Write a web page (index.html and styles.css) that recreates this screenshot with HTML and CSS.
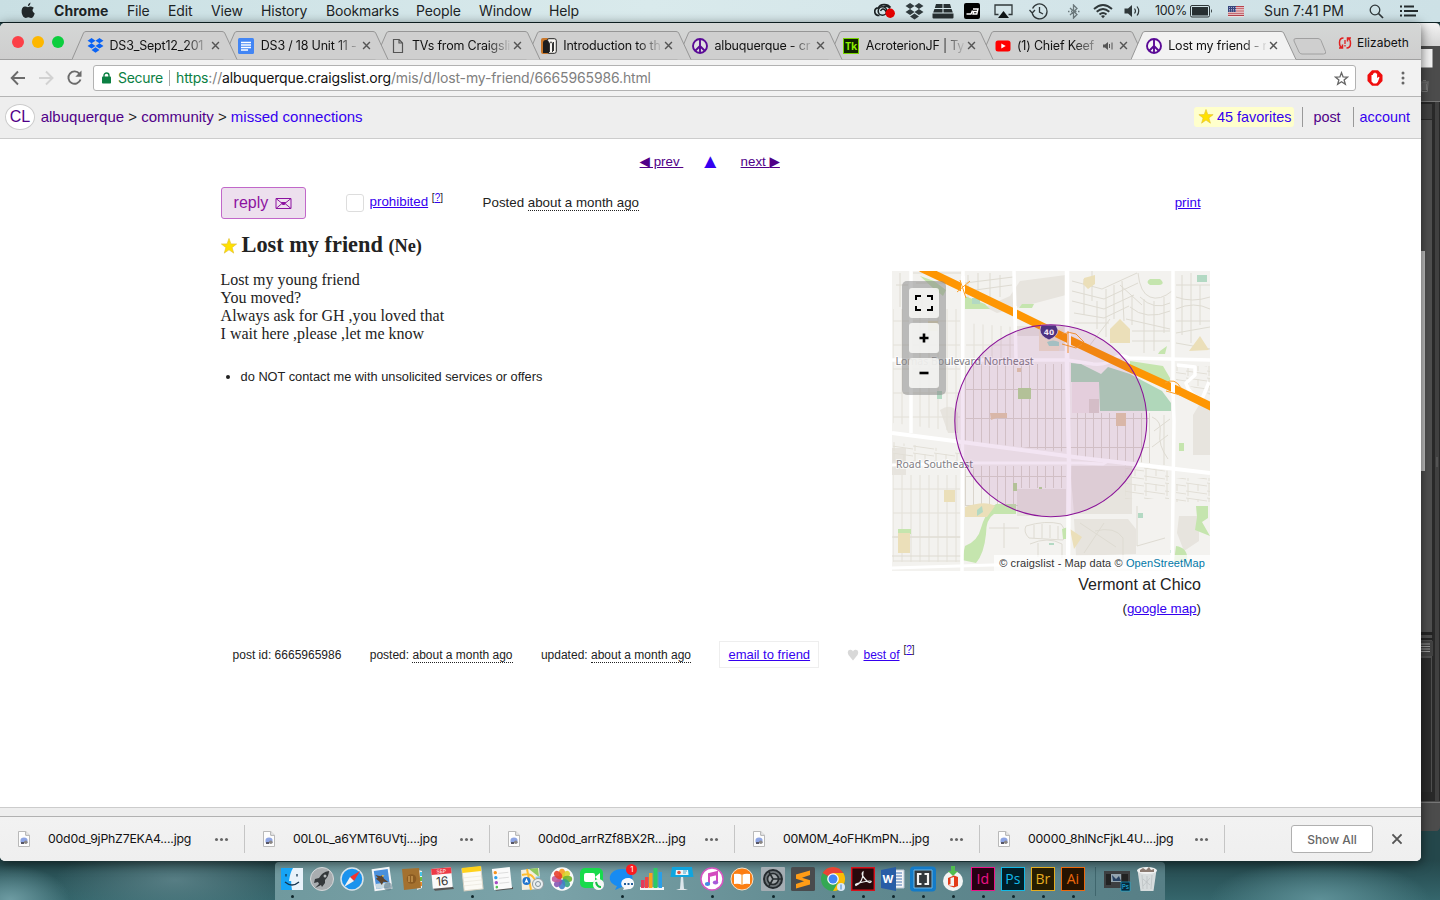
FILE: index.html
```html
<!DOCTYPE html>
<html lang="en">
<head>
<meta charset="utf-8">
<title>Lost my friend - missed connections</title>
<link rel="stylesheet" href="styles.css">
</head>
<body>
<svg class="defs" width="0" height="0" aria-hidden="true">
  <symbol id="x" viewBox="0 0 10 10"><path d="M1.2 1.2l7.6 7.6M8.8 1.2L1.2 8.8" stroke="#555" stroke-width="1.6" fill="none"/></symbol>
  <symbol id="peace" viewBox="0 0 16 16"><circle cx="8" cy="8" r="7" fill="#fff" fill-opacity=".35" stroke="#5a0a96" stroke-width="1.9"/><path d="M8 1v14M8 8l-5 5M8 8l5 5" stroke="#5a0a96" stroke-width="1.9" fill="none"/></symbol>
  <symbol id="drop" viewBox="0 0 18 16"><path d="M4.8 0L9 2.8 4.8 5.6.5 2.8zM13.2 0l4.3 2.8-4.3 2.8L9 2.8zM4.8 5.6L9 8.4l-4.2 2.8L.5 8.4zM13.2 5.6l4.3 2.8-4.3 2.8L9 8.4zM9 9.8l4.2 2.9L9 15.6l-4.2-2.9z"/></symbol>
  <symbol id="star" viewBox="0 0 16 16"><path d="M8 .5l1.9 5.4 5.7.1-4.5 3.5 1.6 5.6L8 11.8l-4.7 3.3 1.6-5.6L.4 6l5.7-.1z"/></symbol>
  <symbol id="file" viewBox="0 0 12 16"><path d="M.5.5h7.2l3.8 3.8v11.2H.5z" fill="#fdfdfd" stroke="#b9b9b9"/><path d="M7.7.5v3.8h3.8" fill="#eee" stroke="#aaa"/><path d="M2.5 9q0-2.500 3.500-2.500T9.500 9v2.500h-7z" fill="#8da4e3"/><circle cx="7.800" cy="11.300" r="1.800" fill="#8b8785"/><path d="M3 11h3v2H3z" fill="#556"/></symbol>
  <symbol id="tab" viewBox="0 0 167 29"><path class="tabfill" d="M0 28.5L11.5 2Q12.200.5 14 .5H150Q152 .5 152.700 2L165 28.500z"/><path d="M0 28.500L11.500 2Q12.200.5 14 .5H150Q152 .5 152.700 2L165 28.500" fill="none" stroke="#969696"/></symbol>
</svg>

<div class="desktop">
  <header class="menubar">
    <nav class="menus">
      <svg class="apple" width="14" height="17" viewBox="0 0 14 17"><path d="M9.400.5Q9.600 3.500 6.800 4.200 6.700 1.500 9.400.5zM7 5.200Q9.500 3.800 12.800 5.800 9.800 8.800 13.700 11.400 12.200 16 10 15.900L7.200 15.200 4.800 15.900Q2 16 .7 11 0 5 3.800 4.500 5.500 4.400 7 5.200z" fill="#22282a"/></svg>
      <b>Chrome</b><span>File</span><span>Edit</span><span>View</span><span>History</span><span>Bookmarks</span><span>People</span><span>Window</span><span>Help</span>
    </nav>
    <div class="extras">
      <svg width="22" height="16" viewBox="0 0 22 16"><path d="M5.500 12.500C-.8 12.500-.5 4.500 4.500 4.800 6 .8 13.500.2 16.500 4.500" stroke="#1c2224" stroke-width="1.700" fill="none"/><circle cx="8.500" cy="8" r="4.300" fill="none" stroke="#1c2224" stroke-width="1.600"/><path d="M6.500 8q2-3.500 4.500-1l2 3M10 3.500q4-1 6 2" fill="none" stroke="#1c2224" stroke-width="1.400"/><circle cx="16.200" cy="10.200" r="4.700" fill="#e50000"/></svg>
      <svg width="19" height="17" fill="#303a3d"><use href="#drop"/></svg>
      <svg width="22" height="15" viewBox="0 0 22 15" fill="#283032"><path d="M4 0h6.500v4H2.800zM11.500 0H18l1.200 4h-7.700zM2.400 5h8.100v3.500H1.200zM11.500 5h8.100l1.200 3.500h-9.300zM.5 9.500h21v4q0 1-1 1h-19q-1 0-1-1z"/></svg>
      <svg width="17" height="16" viewBox="0 0 17 16"><rect width="16" height="16" rx="2" fill="#000"/><path d="M2.500 11h4.500l1.500-3.500M9 6h5l-1.200 5H9l.6-2.500h3.500" stroke="#fff" stroke-width="1.400" fill="none"/></svg>
      <svg width="19" height="15" viewBox="0 0 19 15"><path d="M4.500 10.500H1V1h17v9.500h-3.500" fill="none" stroke="#30383a" stroke-width="1.300"/><path d="M9.500 7l5.500 7H4z" fill="#101617"/></svg>
      <svg width="19" height="17" viewBox="0 0 19 17"><path d="M3.300 10.500A7.500 7.500 0 1 0 3.600 5.500M.5 7l2.700 3 2.800-3M10.500 4v5l3.500 2" fill="none" stroke="#30383a" stroke-width="1.300"/></svg>
      <svg width="13" height="15" viewBox="0 0 13 15"><path d="M3 4l7 6.500L6.500 14V1L10 4.500 3 11M1 7.500h1.500M4 7.500h1.200M8 7.500h1.500M11 7.500h1.500" stroke="#6c797c" stroke-width="1.300" fill="none"/></svg>
      <svg width="20" height="15" viewBox="0 0 20 15"><path d="M1 5Q10-3 19 5M3.700 7.800Q10 2.200 16.300 7.800M6.500 10.500Q10 7.500 13.500 10.500" fill="none" stroke="#30383a" stroke-width="1.900"/><path d="M8 12q2-1.500 4 0l-2 2.200z" fill="#30383a"/></svg>
      <svg width="18" height="14" viewBox="0 0 18 14"><path d="M.5 4.500H4L8 1v12L4 9.500H.5z" fill="#30383a"/><path d="M10.500 4.500q2 2.500 0 5M13 2.500q3.500 4.500 0 9" fill="none" stroke="#30383a" stroke-width="1.200"/></svg>
      <span class="pct">100%</span>
      <svg width="23" height="13" viewBox="0 0 23 13"><rect x=".5" y=".5" width="19" height="11.500" rx="1.500" fill="none" stroke="#30383a"/><rect x="2" y="2" width="16" height="8.500" fill="#283032"/><path d="M21 4q2 2 0 4z" fill="#30383a"/></svg>
      <svg width="16" height="11" viewBox="0 0 16 11"><path fill="#f4e9e9" d="M0 0h16v11H0z"/><path d="M0 .6h16M0 2.800h16M0 5h16M0 7.200h16M0 9.400h16" stroke="#b8424d" stroke-width="1.100"/><path fill="#35477d" d="M0 0h8v6H0z"/><path d="M1 1.500h7M1 3.500h7M1 5h7" stroke="#dce" stroke-width=".7" stroke-dasharray="1 1"/></svg>
      <span class="clock">Sun 7:41 PM</span>
      <svg width="15" height="15" viewBox="0 0 15 15"><circle cx="6" cy="6" r="4.800" fill="none" stroke="#30383a" stroke-width="1.300"/><path d="M9.500 9.500l4.500 4.500" stroke="#30383a" stroke-width="1.700"/></svg>
      <svg width="19" height="12" viewBox="0 0 19 12"><path d="M1 1.500h2M1 6h2M1 10.500h2M5 1.500h10M5 6h14M5 10.500h12" stroke="#252c2e" stroke-width="1.800"/></svg>
    </div>
  </header>

  <div class="back-window">
    <svg width="30" height="808" viewBox="0 0 30 808">
      <defs><linearGradient id="bt" x2="0" y2="1"><stop stop-color="#f4f4f4"/><stop offset="1" stop-color="#d4d4d4"/></linearGradient></defs>
      <path d="M0 0h25q5 0 5 5v798q0 5-5 5H0z" fill="#4c4c4c"/><path d="M0 0h25q5 0 5 5v18H0z" fill="url(#bt)"/>
      <path d="M0 26h22.500v18.500H0z" fill="#f4f4f4"/>
      <path d="M11 60h7l-.7 8.500h-5.600zM10 59h9M13 57.500h3M13 61v6M15 61v6M16.500 61v6" fill="none" stroke="#777"/>
      <path fill="#777" d="M0 78h30v1H0z"/><path fill="#292929" d="M0 79h30v699H0z"/><path fill="#505050" d="M0 97h22v672H0z"/><path fill="#414141" d="M0 81h22v15H0z"/><path fill="#404040" d="M25 79h4v699h-4z"/>
      <path fill="#c5c5c5" d="M0 228h15v220H0z"/><path d="M27 434v10" stroke="#666"/>
      <path fill="#242424" d="M0 609h23v3H0zM0 615h23v2H0z"/><path fill="#424242" d="M0 618h23v15H0z"/><path d="M10 621h10M10 623.500h10M10 626h10M10 628.500h10" stroke="#999"/><path fill="#2c2c2c" d="M0 635h21v134H0z"/><path fill="#777" d="M0 779h30v1H0z"/>
      <path fill="#4c4c4c" d="M0 780h30v23q0 5-5 5H0z"/>
    </svg>
  </div>

  <section class="window">
    <div class="tabstrip">
      <div class="lights"><i class="r"></i><i class="y"></i><i class="g"></i></div>
      <div class="tabs">
        <div class="tab"><svg class="shape" width="167" height="29"><use href="#tab"/></svg><svg class="fav" width="17" height="15" fill="#0a63f5"><use href="#drop"/></svg><span class="title">DS3_Sept12_201</span><svg class="close" width="9" height="9"><use href="#x"/></svg></div>
        <div class="tab"><svg class="shape" width="167" height="29"><use href="#tab"/></svg><svg class="fav" width="16" height="16" viewBox="0 0 16 16"><rect width="16" height="16" rx="1.500" fill="#4285f4"/><path d="M3 4.500h10M3 7h10M3 9.500h10M3 12h7" stroke="#fff" stroke-width="1.300"/></svg><span class="title">DS3 / 18 Unit 11 -</span><svg class="close" width="9" height="9"><use href="#x"/></svg></div>
        <div class="tab"><svg class="shape" width="167" height="29"><use href="#tab"/></svg><svg class="fav" width="16" height="16" viewBox="0 0 16 16"><path d="M3.500 1.500h5.700l3.300 3.500v9.500h-9zM9 1.500V5h3.500" fill="none" stroke="#555" stroke-width="1.200"/></svg><span class="title">TVs from Craigsli</span><svg class="close" width="9" height="9"><use href="#x"/></svg></div>
        <div class="tab"><svg class="shape" width="167" height="29"><use href="#tab"/></svg><svg class="fav" width="16" height="16" viewBox="0 0 16 16"><rect width="8" height="16" rx="2" fill="#c9772a"/><rect x="6" y=".7" width="9.300" height="14.600" rx="2" fill="#f8f6f2" stroke="#222"/><path d="M2 15V5q0-3 3-3t3 3v10z" fill="#1d1d1d"/><path d="M8.500 14V6q0-2 1.500-2t1.500 2v8M12.500 13V4" fill="none" stroke="#333"/></svg><span class="title">Introduction to th</span><svg class="close" width="9" height="9"><use href="#x"/></svg></div>
        <div class="tab"><svg class="shape" width="167" height="29"><use href="#tab"/></svg><svg class="fav" width="16" height="16"><use href="#peace"/></svg><span class="title">albuquerque - cr</span><svg class="close" width="9" height="9"><use href="#x"/></svg></div>
        <div class="tab"><svg class="shape" width="167" height="29"><use href="#tab"/></svg><span class="fav tk">Tk</span><span class="title">AcroterionJF | Ty</span><svg class="close" width="9" height="9"><use href="#x"/></svg></div>
        <div class="tab"><svg class="shape" width="167" height="29"><use href="#tab"/></svg><svg class="fav" width="16" height="16" viewBox="0 0 16 16"><rect x=".5" y="2.500" width="15" height="11" rx="2.500" fill="#f00"/><path d="M6.300 5.500L10.700 8l-4.400 2.500z" fill="#fff"/></svg><span class="title short">(1) Chief Keef</span><svg class="sound" width="11" height="10" viewBox="0 0 11 10"><path d="M0 3.500h2L5 1v8L2 6.500H0z" fill="#555"/><path d="M6.500 3v4M9 1.500v7" stroke="#555"/></svg><svg class="close" width="9" height="9"><use href="#x"/></svg></div>
        <div class="tab active"><svg class="shape" width="167" height="29"><use href="#tab"/></svg><svg class="fav" width="16" height="16"><use href="#peace"/></svg><span class="title">Lost my friend - r</span><svg class="close" width="9" height="9"><use href="#x"/></svg></div>
      </div>
      <svg class="newtab" width="34" height="17" viewBox="0 0 34 17"><path d="M3 .5h22q2 0 3 2l4.500 11q1 2.500-2 2.500H9q-2 0-3-2L1 3Q.2.5 3 .5z" fill="#cfcfcf" stroke="#a0a0a0"/></svg>
      <div class="profile"><svg width="14" height="12" viewBox="0 0 14 12"><path d="M5.500 1Q1.500 1 1.500 5.500T4 10.500M1 11h3.500V7.500M8.500 11q4 0 4-4.500T10 1.500M13 1H9.500v3.500" stroke="#e02020" stroke-width="1.500" fill="none"/><path d="M7 3v4M7 8v1.500" stroke="#e02020" stroke-width="1.300"/></svg><span>Elizabeth</span></div>
    </div>

    <div class="toolbar">
      <svg class="nav" width="74" height="18" viewBox="0 0 74 18"><g fill="none" stroke-width="1.900"><path d="M15 9H2.500M8 2.500L1.700 9 8 15.500" stroke="#6b6b6b"/><path d="M29 9h13M36 2.500L42.500 9 36 15.500" stroke="#d2d2d2"/><path d="M69.500 4.800A6.200 6.200 0 1 0 70.500 10.500" stroke="#6b6b6b"/></g><path d="M71.500 1.500v6.300h-6.200z" fill="#6b6b6b"/></svg>
      <div class="omnibox">
        <svg width="9" height="12" viewBox="0 0 9 12"><rect y="4.500" width="9" height="7" rx=".8" fill="#0b8043"/><path d="M2 5V3.500a2.500 2.500 0 0 1 5 0V5" fill="none" stroke="#0b8043" stroke-width="1.400"/></svg>
        <span class="secure">Secure</span>
        <span class="url"><em>https</em>://<strong>albuquerque.craigslist.org</strong>/mis/d/lost-my-friend/6665965986.html</span>
        <svg class="bookmark" width="15" height="15" viewBox="0 0 16 16"><path d="M8 1.800l1.700 4.500 4.800.2-3.700 3 1.300 4.700L8 11.500l-4.100 2.700 1.300-4.700-3.700-3 4.800-.2z" fill="none" stroke="#666" stroke-width="1.400"/></svg>
      </div>
      <svg class="adblock" width="16" height="16" viewBox="0 0 16 16"><path d="M5 .3h6L15.500 5v6L11 15.700H5L.5 11V5z" fill="#f00d0d"/><path d="M4.500 8.500V5h1.400V3.500h1.300v-.8h1.600v.8h1.300V8l1.700-1.200.7.700-1.700 4.500-1.500 1.500H6.500l-2-2z" fill="#fff"/></svg>
      <svg width="4" height="14" viewBox="0 0 4 14" fill="#666"><circle cx="2" cy="2" r="1.500"/><circle cx="2" cy="7" r="1.500"/><circle cx="2" cy="12" r="1.500"/></svg>
    </div>

    <div class="cl-header">
      <span class="logo">CL</span>
      <div class="crumbs"><a class="v">albuquerque</a> &gt; <a class="v">community</a> &gt; <a>missed connections</a></div>
      <div class="account"><a class="favs"><svg width="16" height="15" fill="#ffe100" stroke="#e3c235" stroke-width=".7"><use href="#star"/></svg>45 favorites</a><a class="cell v">post</a><a class="cell">account</a></div>
    </div>

    <main class="page">
      <nav class="pager"><a class="v"><span class="tri">◀</span> prev&nbsp;</a><a><span class="tri up">▲</span></a><a class="v">next <span class="tri">▶</span></a></nav>
      <div class="actions">
        <button class="reply">reply <svg width="17" height="13" viewBox="0 0 17 13"><path d="M1 1.500h15v10H1z M1 1.500l7.500 6 7.500-6M1 11.500l6-5M16 11.500l-6-5" fill="none" stroke="#8c12a0"/><path d="M6 5h5L9.500 8h-2z" fill="#8c12a0"/></svg></button>
        <span class="box"></span>
        <span class="prohibited"><a>prohibited</a> <sup>[<a>?</a>]</sup></span>
        <span class="posted">Posted <time>about a month ago</time></span>
        <a class="print">print</a>
      </div>
      <h1><svg width="16" height="16" fill="#ffe100" stroke="#e3c235" stroke-width=".7"><use href="#star"/></svg>Lost my friend <small>(Ne)</small></h1>
      <div class="columns">
        <div class="copy">
          <p>Lost my young friend<br>You moved?<br>Always ask for GH ,you loved that<br>I wait here ,please ,let me know</p>
          <ul><li>do NOT contact me with unsolicited services or offers</li></ul>
        </div>
        <aside class="mapbox">
          <div class="map">
            <svg width="318" height="300" viewBox="0 0 318 300">
              <defs>
                <pattern id="g1" width="9" height="24" patternUnits="userSpaceOnUse"><path d="M1 0v24M0 2h9" stroke="#e3e0d8" stroke-width="1"/></pattern>
                <pattern id="g2" width="8" height="29" patternUnits="userSpaceOnUse"><path d="M1.500 0v29M0 2.500h8" stroke="#dad5cc" stroke-width="1"/></pattern>
                <pattern id="g4" width="21" height="15" patternUnits="userSpaceOnUse"><path d="M0 2l21 3M2 2v13M12 3v7M0 10l21 3" stroke="#e2dfd6" fill="none"/></pattern>
              </defs>
              <path fill="#f3f2ef" d="M0 0h318v300H0z"/>
              <path fill="#e7e4de" d="M128 10l46-6v20l-49 13-20 5-12-6 25-11zM125 55h48v25h-25V65h-23zM307 134h11v50h-17v-40zM0 177h14v27H0zM125 218h49v27h-49zM178 195h62v48h-58zM182 248h54l8 10v25l-60 2zM287 245h20v25l-15 10-7-18zM48 139q12-8 18 3v20H56z"/>
              <path fill="url(#g1)" d="M1 38h67v123L1 152zM1 204h67v87H1z"/>
              <path fill="url(#g1)" d="M74 52l48 4v31H74z"/>
              <path fill="url(#g2)" d="M73 93h102v88L73 170zM178 142h80v50l-80-7zM73 195h101v22h-48v18H73z"/>
              <path fill="url(#g4)" d="M1 171l67 9v10H1zM233 194l44 6v28h-44zM284 207h34v24h-34zM284 95h34v29l-34-15z"/>
              <g fill="none" stroke="#dedbd2"><path d="M180 10l30 8 35-16M180 20l32 8 34-16M180 30l32 8 30-14M182 42l30 5 25-12M182 52h35M200 0v30M192 8v36M214 18v48M222 14v34M230 10l2 40M205 30v28M246 2q2 20 12 24t22-6M248 26q14 14 30 6M238 36q16 14 40 4M234 48l44 10M240 24v30M252 28v54M262 30v50M272 26v36M240 60h38M240 70h38M228 14l22 20M218 48l-20 26M284 14h34M284 26q16 6 34 0M284 38q18-8 34 0M284 50h34M284 62l34-6M290 4v60M299 2v70M308 14v40M284 72l34 6M260 146q10 4 8 16t8 26M262 160l16-12M260 176l16-12M272 144v50M76 4v24M86 2v26M98 2v28M108 4v22M73 12l48-6M76 20l44-6M21 2h48M24 12h44M4 14h12M8 2v34M30 20v16M44 26v10"/><path d="M134 255q20-6 35-2 8 10 2 16l-34-2q-6-6-3-12zM142 254v13M150 253v14M158 254v13M166 255v13M97 257h30M112 277v-25M138 273q18-8 32 0v14M146 286v-14M188 252l36 24M192 282l20-30M203 260q20-5 28 7v25M0 285h70M0 266h70M245 235v40l28-8"/></g>
              <path fill="#c5e5ae" d="M28 5l14 5 12 9-3 6-10-8zM73 25l20 8 5 5H73zM130 33h12l-2 4h-13zM258 8h10q6 5-1 6h-9q-5-3 0-6zM238 90l33 5 7 12v12l-40-22zM104 233h20v10h-22q-8 5-8 20-2 20-10 29l-14-3 3-14q13-5 16-18 4-15 15-24zM287 172h5v8h-5zM304 235h12v12l-6 4 8 14-15-6 2-13zM6 258h13v5H6zM170 258l6-2v12h-5zM284 275q13 2 11 16h-13zM268 80l7-5-2 8h-7z"/>
              <path fill="#ebdfb9" d="M192 7l11-3v9l-7 5-5-5zM228 48l10 10v14h-20V58zM308 65l9 14-20 1zM52 219h11v12H52zM73 236q20-7 30-1l-8 11H73zM6 262h12v20H6zM36 50h10v10H36zM178 258l12 8-8 12z"/>
              <path fill="#b3d9c3" d="M80 27h8v6h-8zM305 4h10v7h-10zM246 242h5v5h-5zM157 272h5v2h-5zM45 120h5v8h-5zM278 279h3v3h-3zM85 239l5-4 1 6-6 4z"/>
              <path d="M147 58h24l-4 22h-20z" fill="#eee0cb"/><path d="M155 71q6-3 12 0v4h-10z" fill="#a8d5c9"/>
              <path d="M98 142h17v5H104l-5 2zM224 142h10v13h-10zM125 97h4v4h-4z" fill="#e3ccac"/><path d="M126 117h13v11h-13zM121 212h4v8h-4zM147 216h3v2h-3z" fill="#b8d79a"/><path d="M180 111h27v31h-27z" fill="#efe6e6"/><path d="M197 128h10v14h-10z" fill="#ddd3cf"/>
              <path fill="#b0d7ba" d="M179 92l10 1 20 10 7-7 22 7 32 17 9 12v8h-71l-1-29h-28z"/>
              <g stroke="#fff" fill="none" stroke-width="3.500" stroke-linejoin="round"><path d="M19 0v162M71 0L70 300M122 0l2 88M281 0v120l1 30-2 150"/><path d="M175 0v94l2 96-1 110" stroke-width="4.500"/><path d="M0 89h175l26 4q15 1 20-5 8-6 16-1l81 2"/><path d="M0 162l70 9 120 16 128 15" stroke-width="4"/><path d="M0 194l70-2h119l22 1 7-4M0 297l100-3h75l143 5" stroke-width="3"/><path d="M285 94l18 2v8l-9 8q3 12 16 16l7-17"/></g>
              <path d="M29-3L71 17l52 25 55 27 57 27 46 21 41 20" fill="none" stroke="#fe9603" stroke-width="8"/>
              <path d="M123 35v13M71 5v22M177 62v14M281 112v12" stroke="#fff" stroke-width="4"/><path d="M65 21l13-11M68 9l6 18M170 63q8-3 14 0l8 8M170 73l14 4 6-4M176 60v22M273 112q10-6 16 5M274 120l14 4" stroke="#fba02a" fill="none"/>
              <g font-family="Noto Sans, sans-serif" font-size="11" fill="#817e84" stroke="#fff" stroke-width="2" stroke-opacity=".7" paint-order="stroke"><text x="3.500" y="94" textLength="138" lengthAdjust="spacingAndGlyphs">Lomas Boulevard Northeast</text><text x="4" y="197.300" textLength="77" lengthAdjust="spacingAndGlyphs">Road Southeast</text></g>
              <path d="M149 54h15l2 5q0 6-9 10-9-4-9-10z" fill="#483880" stroke="#eee" stroke-width=".7"/><text x="157" y="64" text-anchor="middle" font-family="DejaVu Sans, sans-serif" font-weight="bold" font-size="7.500" fill="#fff">40</text>
              <circle cx="158.800" cy="149.700" r="96" fill="#8b008b" fill-opacity=".1" stroke="#8b1499" stroke-width="1.100"/>
            </svg>
            <div class="controls"><span><svg width="18" height="16" viewBox="0 0 18 16"><path d="M1 5V1h5M12 1h5v4M17 11v4h-5M6 15H1v-4" fill="none" stroke="#000" stroke-width="2"/></svg></span><span><svg width="10" height="10"><path d="M.5 5h9M5 .5v9" stroke="#000" stroke-width="2.600"/></svg></span><span><svg width="10" height="10"><path d="M.5 5h9" stroke="#000" stroke-width="2.600"/></svg></span></div>
            <div class="attribution">© craigslist - Map data © <a>OpenStreetMap</a></div>
          </div>
          <div class="address">Vermont at Chico</div>
          <div class="gmap">(<a>google map</a>)</div>
        </aside>
      </div>
      <div class="postinfo"><span>post id: 6665965986</span><span>posted: <time>about a month ago</time></span><span>updated: <time>about a month ago</time></span><a class="email">email to friend</a><span class="best"><svg width="12" height="12" viewBox="0 0 12 12"><path d="M6 11.500L1.500 6Q-.5 1.500 3 .8 5.500.5 6 2.500 6.500.5 9 .8q3.500.7 1.500 5.200z" fill="#d8d8d8"/></svg><a>best of</a> <sup>[<a>?</a>]</sup></span></div>
    </main>
    <div class="page-footer"></div>

    <div class="downloads">
      <div class="dl"><svg width="12" height="16"><use href="#file"/></svg><span>00d0d_9jPhZ7EKA4....jpg</span><i></i></div>
      <div class="dl"><svg width="12" height="16"><use href="#file"/></svg><span>00L0L_a6YMT6UVtj....jpg</span><i></i></div>
      <div class="dl"><svg width="12" height="16"><use href="#file"/></svg><span>00d0d_arrRZf8BX2R....jpg</span><i></i></div>
      <div class="dl"><svg width="12" height="16"><use href="#file"/></svg><span>00M0M_4oFHKmPN....jpg</span><i></i></div>
      <div class="dl"><svg width="12" height="16"><use href="#file"/></svg><span>00000_8hlNcFjkL4U....jpg</span><i></i></div>
      <button class="showall">Show All</button>
      <svg class="dismiss" width="12" height="12"><use href="#x"/></svg>
    </div>
  </section>

  <footer class="dock">
    <div class="app on"><svg viewBox="0 0 24 24"><path fill="#17a4f5" d="M1 1h12v22H1z"/><path fill="#e9f2fa" d="M13 1h10v22H12q-1-5-.8-9H9Q10 6 13 1z"/><path d="M6 7v2.500M17 7v2.500M5 15q7 6 14 0" stroke="#153652" stroke-width="1.300" fill="none"/></svg></div>
    <div class="app"><svg viewBox="0 0 24 24"><circle cx="12" cy="12" r="11.500" fill="#a9adb0" stroke="#d5d8da"/><path d="M19 4q-7 1-10 7l-4 1-1 4 4-1 1 2-4 4 6-3 1 2 3-4v-3q4-4 4-9z" fill="#34383b"/><circle cx="15" cy="9" r="1.500" fill="#b5b9bb"/></svg></div>
    <div class="app"><svg viewBox="0 0 24 24"><circle cx="12" cy="12" r="11" fill="#1b93ed" stroke="#d9e3e8" stroke-width="1.500"/><path d="M20 4l-6 10-4-4z" fill="#f4332f"/><path d="M4 20l6-10 4 4z" fill="#f2f2f2"/></svg></div>
    <div class="app"><svg viewBox="0 0 24 24"><g transform="rotate(-8 12 12)"><path fill="#f3f5f7" d="M3 1h18v22H3z"/><path fill="#4a90dc" d="M5 3h14v18H5z"/><path fill="#c8d9e2" d="M5 16h14v5H5z"/><path d="M6 7l5 2 2-1 1 4 4 4-5-1-2 3-2-4-3-3 2-1z" fill="#5c4430"/><path d="M12 8l3 1-2 1z" fill="#f2c34a"/></g><circle cx="18" cy="19.500" r="4" fill="#4b6977" fill-opacity=".5"/></svg></div>
    <div class="app"><svg viewBox="0 0 24 24"><path fill="#eee" d="M18 3l4 1v17l-5 2z"/><path d="M21 5v4" stroke="#45c6e9" stroke-width="2"/><path d="M21 10v4" stroke="#6ac143" stroke-width="2"/><path d="M21 15v4" stroke="#ed8e30" stroke-width="2"/><path fill="#a4712f" d="M2 2l17-1 2 20-17 2z"/><circle cx="11.500" cy="12" r="4.800" fill="#8b5b22"/><path d="M9 9v6M12 9v6" stroke="#b88743" stroke-width="2"/></svg></div>
    <div class="app"><svg viewBox="0 0 24 24"><g transform="rotate(-5 12 12)"><path d="M2 20h20l1 3H4z" fill="#555"/><path fill="#fafafa" d="M2 1h20v20H2z"/><path fill="#ed3945" d="M2 1h20v6H2z"/><text x="12" y="6" font-size="5" fill="#fff" text-anchor="middle">SEP</text><text x="12" y="18.500" font-size="12" fill="#333" text-anchor="middle">16</text></g></svg></div>
    <div class="app on"><svg viewBox="0 0 24 24"><g transform="rotate(-6 12 12)"><path fill="#fbfaf5" stroke="#d6d1c3" d="M3 1h19v22H3z"/><path fill="#ffd21c" d="M3 0h19v5H3z"/><path d="M3 10h19M3 14h19M3 18h19" stroke="#e7e3d9" stroke-width=".6"/></g></svg></div>
    <div class="app"><svg viewBox="0 0 24 24"><g transform="rotate(-6 12 12)"><path fill="#555" d="M4 22l18-1v2H5z"/><path fill="#fafafa" d="M3 1h18v21H3z"/><circle cx="6" cy="5" r="1.700" fill="#f7941d"/><circle cx="6" cy="10" r="1.700" fill="#2aa0ee"/><circle cx="6" cy="15" r="1.700" fill="#a64bc5"/><circle cx="6" cy="19.500" r="1.300" fill="#50c153"/><path d="M9 6h10M9 11h10M9 16h10" stroke="#ccc" stroke-width=".6"/></g></svg></div>
    <div class="app"><svg viewBox="0 0 24 24"><path fill="#f4eee0" d="M1 3l18-2 2 21-19 1z"/><path fill="#8fc95f" d="M9 2l9-1 1 9z"/><path d="M2 8q8-2 11 2t7 10M7 2l4 21" fill="none" stroke="#fdbd30" stroke-width="2"/><path fill="#89caea" d="M15 10l5 5v-6z"/><circle cx="6.500" cy="14" r="4" fill="#2174cd"/><path d="M6.500 11l2 5-2-1-2 1z" fill="#fff"/><circle cx="18" cy="17" r="5.500" fill="#e9eef0" stroke="#8d999e"/><circle cx="18" cy="17" r="2.500" fill="none" stroke="#82939b"/></svg></div>
    <div class="app"><svg viewBox="0 0 24 24"><circle cx="12" cy="12" r="11.700" fill="#fafafa"/><g fill-opacity=".9"><ellipse cx="12" cy="6.500" rx="3.200" ry="4.700" fill="#f89b20"/><ellipse cx="12" cy="6.500" rx="3.200" ry="4.700" fill="#d9d32c" transform="rotate(45 12 12)"/><ellipse cx="12" cy="6.500" rx="3.200" ry="4.700" fill="#6fb52f" transform="rotate(90 12 12)"/><ellipse cx="12" cy="6.500" rx="3.200" ry="4.700" fill="#36a583" transform="rotate(135 12 12)"/><ellipse cx="12" cy="6.500" rx="3.200" ry="4.700" fill="#4080c8" transform="rotate(180 12 12)"/><ellipse cx="12" cy="6.500" rx="3.200" ry="4.700" fill="#8558b4" transform="rotate(225 12 12)"/><ellipse cx="12" cy="6.500" rx="3.200" ry="4.700" fill="#c05a9a" transform="rotate(270 12 12)"/><ellipse cx="12" cy="6.500" rx="3.200" ry="4.700" fill="#e8402c" transform="rotate(315 12 12)"/></g></svg></div>
    <div class="app"><svg viewBox="0 0 24 24"><rect y="1" width="23" height="20" rx="5" fill="#18db4c"/><rect x="4" y="6" width="11" height="9" rx="2" fill="#fff"/><path d="M15 10l5-4v9z" fill="#fff"/><circle cx="18.500" cy="17.500" r="5.500" fill="#f6f8f6"/><path d="M16 15q1 5 5 5" stroke="#15bd45" stroke-width="2" fill="none"/></svg></div>
    <div class="app on"><svg viewBox="0 0 24 24"><path d="M12 2c14 0 14 18 0 18l-7 3 2-4C-5 15-1 2 12 2z" fill="#178bf2"/><path d="M18 11c8 0 8 11 1 11l-6 1 1-2c-5-3-3-10 4-10z" fill="#f5f8fb"/><path d="M14 17h2M17.500 17h2M21 17h2" stroke="#215c98" stroke-width="2"/></svg><b class="badge">1</b></div>
    <div class="app"><svg viewBox="0 0 24 24"><path d="M0 20h24v3H0z" fill="#f5f5f5"/><path fill="#e5395b" d="M1 13h3.500v8H1z"/><path fill="#f34343" d="M5 10h3.500v11H5z"/><path fill="#fba11c" d="M9 6h3.500v15H9z"/><path fill="#2acb65" d="M13.500 1h4v20h-4z"/><path fill="#2a9fe9" d="M18.500 5H22v16h-3.500z"/></svg></div>
    <div class="app"><svg viewBox="0 0 24 24"><path d="M11 9h2l1 13H10z" fill="#dce7ec"/><path d="M6 23q6-3 12 0z" fill="#e1e8eb"/><path d="M2 0h20l1.500 10H.5z" fill="#10a5df"/><path d="M6 3h12l.5 5H5.500z" fill="#eef5f8"/><circle cx="9" cy="5.500" r="1.800" fill="#de523e"/><path d="M13 4h4M13 6h3" stroke="#48a5cc"/></svg></div>
    <div class="app on"><svg viewBox="0 0 24 24"><circle cx="12" cy="12" r="11" fill="#fff" stroke="#d655c1" stroke-width="1.500"/><path d="M9 17V7l8-2v10M9 9l8-2" fill="none" stroke="#d34cbf" stroke-width="2"/><ellipse cx="7.500" cy="17" rx="2.700" ry="2" fill="#438de4"/><ellipse cx="15.500" cy="15.500" rx="2.700" ry="2" fill="#a65bd9"/></svg></div>
    <div class="app"><svg viewBox="0 0 24 24"><circle cx="12" cy="12" r="11" fill="#fc7e12" stroke="#f3e1ca"/><path d="M4 7q5-1 8 1 3-2 8-1v10q-5-1-8 1-3-2-8-1z" fill="#fff"/><path d="M12 8v10" stroke="#f28a13"/></svg></div>
    <div class="app on"><svg viewBox="0 0 24 24"><rect width="24" height="24" rx="1" fill="#a4adb3"/><circle cx="12" cy="12" r="9" fill="#70777b" stroke="#242a2e" stroke-width="2"/><circle cx="12" cy="12" r="5.500" fill="#a1a7aa" stroke="#252b2e" stroke-width="1.700"/><path d="M12 12L8 5M12 12l-4 7M12 12h8" stroke="#252b2e" stroke-width="1.600"/></svg></div>
    <div class="app"><svg viewBox="0 0 24 24"><rect width="24" height="24" rx="1.500" fill="#494b4d"/><path d="M19 3.500v4.500l-8 2.700 8 2.600v4.200L5 21.500V17l8-2.700-8-2.600V7.500z" fill="#ff9c16"/></svg></div>
    <div class="app on"><svg viewBox="0 0 24 24"><circle cx="12" cy="12" r="12" fill="#34a853"/><path d="M12 12L1.600 6A12 12 0 0 1 22.400 6z" fill="#ea4335"/><path d="M12 6h10.400A12 12 0 0 1 12 24l5.200-9z" fill="#fbbc05"/><circle cx="12" cy="12" r="5.800" fill="#fff"/><circle cx="12" cy="12" r="4.500" fill="#4285f4"/><circle cx="20" cy="20" r="4" fill="#dbe9f8"/><path d="M20 17.500v5" stroke="#4787c7"/></svg></div>
    <div class="app on"><svg viewBox="0 0 24 24"><path fill="#260a0c" stroke="#da101b" stroke-width="1.400" d="M.7.700h22.600v22.600H.7z"/><path d="M5 18.500q7-3 7-13.500-2.500 2 2 7t6 3-8 0-7 3.500z" fill="none" stroke="#eee" stroke-width="1.200"/></svg></div>
    <div class="app on"><svg viewBox="0 0 24 24"><path fill="#f4f5f7" stroke="#bac6d4" d="M12 3h11v18H12z"/><path d="M15 6h6M15 9h6M15 12h6M15 15h6M15 18h6" stroke="#4775b2"/><path fill="#285da6" d="M0 3l15-3v24L0 21z"/><text x="7" y="16" font-size="11" font-weight="bold" fill="#fff" text-anchor="middle">W</text></svg></div>
    <div class="app on"><svg viewBox="0 0 24 24"><rect x="-1" y="-.5" width="26" height="25" rx="4" fill="#137bc8"/><path fill="#33383c" stroke="#72b7e3" d="M3 3h18v18H3z"/><path d="M10.500 7H7v10h3.500M13.500 7H17v10h-3.500" fill="none" stroke="#f3f3f3" stroke-width="2.200"/></svg></div>
    <div class="app on"><svg viewBox="0 0 24 24"><circle cx="12" cy="14" r="10" fill="#f2f4f4"/><path d="M10-1h4v5h3l-5 5-5-5h3z" fill="#51bd50"/><path d="M7 11l6-2.500 4 1.500v9l-4 1.500-6-2 6 .5v-9L9.500 11v6L7 18z" fill="#e33b18"/></svg></div>
    <div class="app on"><span class="adobe id">Id</span></div>
    <div class="app on"><span class="adobe ps">Ps</span></div>
    <div class="app on"><span class="adobe br">Br</span></div>
    <div class="app on"><span class="adobe ai">Ai</span></div>
    <div class="sep"></div>
    <div class="app"><svg class="wide" viewBox="0 0 26 24"><path fill="#3d3f41" d="M0 4h26v17H0z"/><path fill="#222" d="M2 7h5v11H2zM18 7h6v11h-6z"/><path fill="#95a5b0" d="M7 7h10v8H7z"/><path d="M8 8l4 4 3-3 2 5H9z" fill="#294263"/><path fill="#082638" stroke="#19b5e5" stroke-width=".6" d="M17 15h9v9h-9z"/><text x="21.500" y="21.500" font-size="6" text-anchor="middle" fill="#27c4ef">Ps</text></svg></div>
    <div class="app"><svg viewBox="0 0 24 24"><path d="M2.500 3h19l-3 21h-13z" fill="#d7dcdd"/><ellipse cx="12" cy="3.500" rx="10" ry="3.500" fill="#f0f1f1"/><path d="M5 3l3-2 3 2 3-3 2 3 3-1v3H5z" fill="#8b7b72"/><path d="M7 8l1 14M12 9v13M17 8l-1 14M8 12l7 6M15 11l-7 8" stroke="#b9bfc0" fill="none" stroke-width=".7"/></svg></div>
  </footer>
</div>
</body>
</html>
```

FILE: styles.css
```css
* { box-sizing: border-box; }
body { margin: 0; font-family: "Liberation Sans", Arial, sans-serif; color: #222; }
svg { display: block; flex: none; }
.defs { position: absolute; }
.desktop {
  position: relative; width: 1440px; height: 900px; overflow: hidden;
  display: flex; flex-direction: column;
  background:
    radial-gradient(ellipse 120px 40px at 175px 880px, #6c9198aa, transparent),
    radial-gradient(ellipse 60px 35px at 10px 900px, #6e9ca3, transparent),
    radial-gradient(ellipse 110px 40px at 1320px 900px, #5e9097, transparent),
    linear-gradient(#24474b 860px, #35666c 900px);
}
a { color: #3500f0; }
a.v { color: #500088; }

/* system menu bar */
.menubar {
  height: 23px; flex: none; display: flex; justify-content: space-between; border-bottom: 1px solid #102426;
  background: linear-gradient(90deg, #c9dfe3, #d9eaec 45%, #d4e5e9 70%, #cde1e6);
  font: 14px/22px Inter, sans-serif; color: #1d2426; white-space: nowrap;
}
.menus { display: grid; grid-template-columns: 33px 73px 41px 43px 50px 65px 90px 63px 70px 50px; padding-left: 21px; }
.apple { margin-top: 2px; }
.menus b { letter-spacing: .05px; }
.menus span { letter-spacing: -.15px; }
.extras { display: grid; grid-template-columns: 31px 27px 32px 30px 35px 38px 26px 31px 31px 35px 38px 36px 105px 30px 41px; align-items: center; }
.pct { font-size: 12.500px; letter-spacing: -.3px; }
.clock { letter-spacing: -.1px; }

/* browser window */
.back-window { position: absolute; left: 1410px; top: 23px; }
.window {
  position: relative; width: 1421px; height: 838px; display: flex; flex-direction: column; flex: none;
  background: #fff; border-radius: 5px; overflow: hidden; box-shadow: 0 2px 12px #0009;
}
.tabstrip { height: 37px; flex: none; display: flex; border-bottom: 1px solid #a0a0a0; background: linear-gradient(#d5d7d6, #cecece); font: 12.500px/16px Inter, sans-serif; color: #111; }
.lights { display: flex; gap: 8px; padding: 13px 0 0 12px; width: 72px; }
.lights i { width: 12px; height: 12px; border-radius: 50%; }
.r { background: #fc4048; } .y { background: #fdb700; } .g { background: #0cce3e; }
.tabs { display: flex; padding-top: 8px; }
.tab { position: relative; width: 151.250px; height: 29px; display: grid; grid-template-columns: 22.500px 98px 30px; align-items: center; padding-left: 15px; }
/* each tab overlaps the one on its right */
.tab:nth-child(1) { z-index: 7; } .tab:nth-child(2) { z-index: 6; } .tab:nth-child(3) { z-index: 5; }
.tab:nth-child(4) { z-index: 4; } .tab:nth-child(5) { z-index: 3; } .tab:nth-child(6) { z-index: 2; } .tab:nth-child(7) { z-index: 1; }
.tab.active { z-index: 8; }
.shape { position: absolute; left: 0; top: 0; overflow: visible; fill: #cfcfcf; }
.active .shape { fill: #f2f2f2; }
.tab > :not(.shape) { position: relative; }
.title { white-space: nowrap; letter-spacing: -.2px; -webkit-mask-image: linear-gradient(90deg, #000 75px, transparent 100px); mask-image: linear-gradient(90deg, #000 75px, transparent 100px); }
.close { margin-left: 3px; }
.tab:has(.sound) { grid-template-columns: 22.500px 86px 15px 24px; }
.short { -webkit-mask-image: linear-gradient(90deg, #000 55px, transparent 88px); mask-image: linear-gradient(90deg, #000 55px, transparent 88px); }
.tab:has(.sound) .close { margin-left: 1px; }
.tk { width: 16px; height: 16px; background: #102300; border: 1px solid #77d400; color: #8bef00; font: bold 10px/14px "Open Sans", sans-serif; text-align: center; }
.newtab { margin: 15px 0 0 11px; }
.profile { display: flex; gap: 5px; align-items: center; height: 16px; margin: 12px 0 0 11px; font-size: 12px; }
.toolbar { height: 37px; flex: none; display: flex; align-items: center; background: #f2f2f2; border-bottom: 1px solid #b5b5b5; padding: 0 16px 0 10px; }
.nav { margin-right: 9px; }
.omnibox { width: 1263px; height: 26px; display: flex; align-items: center; border: 1px solid #b2b2b2; border-radius: 3px; background: #fff; padding: 0 6px 0 8px; font: 14px/24px Inter, sans-serif; color: #808080; }
.secure { color: #0b8043; margin-left: 7px; border-right: 1px solid #aaa; line-height: 16px; width: 52px; letter-spacing: -.3px; }
.url { margin-left: 6px; letter-spacing: -.14px; }
.url em { color: #0b8043; font-style: normal; } .url strong { color: #111; font-weight: 400; }
.bookmark { margin-left: auto; }
.adblock { margin: 0 18px 0 11px; }

/* listing page */
.cl-header { height: 42px; flex: none; display: flex; align-items: center; background: #eee; border-bottom: 1px solid #ccc; padding: 0 11px 2px 5px; font-size: 15px; }
.logo { width: 30px; height: 26px; border: 1px solid #ccc; border-radius: 50%; background: #fff; color: #500088; font-size: 16px; line-height: 24px; text-align: center; margin-right: 5.700px; }
.account { margin-left: auto; display: flex; align-items: center; font-size: 14.400px; }
.favs { display: flex; gap: 3px; background: #ffc; border-radius: 3px; padding: 1px 3px 1px 4px; margin-right: 8px; height: 20px; line-height: 18px; }
.favs svg { margin-top: 1px; }
.cell { border-left: 1px solid #999; line-height: 20px; padding: 0 12px 0 10px; }
.cell + .cell { padding: 0 0 0 6px; }
.page { flex: 1; width: 980px; margin-left: 220.600px; font-size: 13.333px; }
.pager { display: flex; justify-content: center; padding-top: 14px; line-height: 16px; }
.pager a { width: 44px; white-space: nowrap; margin-right: 21px; }
.pager a:nth-child(2) { width: 12px; margin-right: 24px; }
.pager a:nth-child(3) { width: 41px; margin: 0; }
.pager a, .prohibited a, .print, .gmap a, .email, .best a { text-decoration: underline; }
.tri { font-family: "DejaVu Sans", sans-serif; font-size: 13.500px; line-height: 16px; }
.up { font-size: 15px; }
.actions { display: flex; align-items: center; height: 32px; margin-top: 17px; }
.reply { width: 85px; height: 32px; display: flex; align-items: center; gap: 7px; padding: 0 12px; border: 1px solid #c168c9; border-radius: 3px; background: #ede0ee; color: #8c12a0; font: 16px "Liberation Sans", Arial, sans-serif; }
.box { width: 18px; height: 18px; border: 1px solid #ddd; border-radius: 3px; margin: 0 6px 0 40px; }
.prohibited { margin-bottom: 3px; width: 113px; }
.posted, .print { margin-bottom: 2px; }
sup { font-size: 10px; line-height: 0; vertical-align: 5px; }
time { border-bottom: 1px dotted #222; }
.print { margin-left: auto; }
h1 { display: flex; align-items: baseline; margin: 13px 0 0; font: bold 22.300px/25px "Liberation Serif", "Times New Roman", serif; white-space: pre; }
h1 svg { margin-right: 5px; align-self: center; }
h1 small { font-size: 18.300px; }
.columns { display: flex; justify-content: space-between; margin-top: 12px; height: 349px; }
.copy p { margin: 0; font: 16px/18px "Liberation Serif", "Times New Roman", serif; }
.copy ul { margin: 25px 0 0; padding-left: 20px; line-height: 17px; font-size: 12.800px; }
.mapbox { width: 318px; margin-right: -9.400px; text-align: right; }
.map { position: relative; height: 300px; overflow: hidden; }
.controls { position: absolute; left: 10px; top: 10px; width: 44px; height: 114px; border-radius: 5px; background: #8888; padding: 7px; display: flex; flex-direction: column; gap: 5px; }
.controls span { width: 30px; height: 30px; border-radius: 3px; background: #f7f7f5e0; display: grid; place-items: center; }
.attribution { position: absolute; right: 0; bottom: 0; height: 16px; line-height: 16px; padding: 0 5px; background: #fffb; font-size: 11px; white-space: nowrap; color: #333; letter-spacing: .11px; }
.attribution a { color: #0078a8; }
.address { margin: 4px 9px 0; font-size: 16px; line-height: 19px; }
.gmap { margin: 7px 9px 0; line-height: 16px; }
.postinfo { display: flex; align-items: center; font-size: 12px; height: 27px; padding-left: 12px; margin-top: 21px; gap: 28.400px; white-space: nowrap; }
.email { border: 1px solid #eee; font-size: 13px; padding: 5px 8px; }
.best { display: flex; gap: 4px; align-items: center; }
.best sup { margin-top: -10px; }
.page-footer { height: 9px; flex: none; background: #eee; border-top: 1px solid #ccc; }
.downloads { height: 45px; flex: none; display: flex; align-items: center; background: linear-gradient(#f2f2f2, #efefef); border-top: 1px solid #b1b1b1; font: 12.300px/16px Inter, sans-serif; color: #111; }
.dl { width: 245px; height: 28px; display: flex; align-items: center; border-right: 1px solid #c5c5c5; padding-left: 18px; }
.dl span { margin-left: 18px; width: 167px; letter-spacing: -.2px; }
.dl i { width: 3px; height: 3px; border-radius: 50%; background: #666; box-shadow: 5px 0 #666, 10px 0 #666; }
.showall { margin-left: auto; width: 82px; height: 28px; border: 1px solid #b0b0b0; border-radius: 3px; background: #fff; color: #666; font: 500 12px Inter, sans-serif; padding: 0; }
.dismiss { margin: 0 18px 0 18px; }

/* application dock */
.dock { margin: 1px 0 0 275px; width: 890px; height: 38px; flex: none; display: flex; padding: 5px 0 0 2px; border-radius: 4px 4px 0 0; background: linear-gradient(90deg, #70999e, #7ba3a9 30%, #628b91 60%, #577f86); font-family: Inter, sans-serif; }
.app { position: relative; width: 30.040px; height: 33px; display: flex; justify-content: center; }
.app > svg { width: 24px; height: 24px; overflow: visible; }
.app > svg.wide { width: 26px; }
.app.on::after { content: ""; position: absolute; left: 14px; bottom: 2px; width: 3px; height: 3px; border-radius: 50%; background: #10272c; }
.badge { position: absolute; right: 0; top: -3px; width: 11px; height: 11px; border-radius: 50%; background: #f91c20; color: #fff; font: 8px/11px Inter, sans-serif; text-align: center; }
.adobe { width: 24px; height: 24px; border: 1.500px solid; font: 14px/21px "Open Sans", sans-serif; text-align: center; }
.id { background: #260012; color: #ed1388; } .ps { background: #001d26; color: #12b9e6; }
.br { background: #261c00; color: #e5ac20; } .ai { background: #261300; color: #ed680c; }
.sep { width: 1px; height: 29px; background: #3f666d; margin: 0 6px 0 7px; }
```
